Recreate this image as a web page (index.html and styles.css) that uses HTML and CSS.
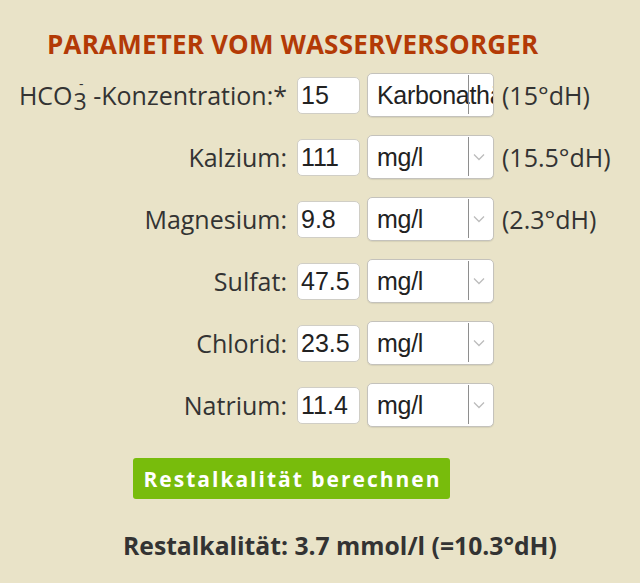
FILE: index.html
```html
<!DOCTYPE html>
<html lang="de">
<head>
<meta charset="utf-8">
<link rel="stylesheet" href="styles.css">
</head>
<body>
<div class="page">
  <h2 class="title">PARAMETER VOM WASSERVERSORGER</h2>
  <div class="rows">
    <div class="row">
      <label class="label">HCO<span class="ion-sub">3</span><span class="ion-sup">-</span> -Konzentration:*</label>
      <div class="input">15</div>
      <div class="select"><span class="sel-text">Karbonathärte</span><span class="divider"></span></div>
      <span class="note">(15°dH)</span>
    </div>
    <div class="row">
      <label class="label">Kalzium:</label>
      <div class="input">111</div>
      <div class="select"><span class="sel-text">mg/l</span><span class="divider"></span><svg class="chev" viewBox="0 0 12 8"><path d="M1 1.5 L6 6.5 L11 1.5" /></svg></div>
      <span class="note">(15.5°dH)</span>
    </div>
    <div class="row">
      <label class="label">Magnesium:</label>
      <div class="input">9.8</div>
      <div class="select"><span class="sel-text">mg/l</span><span class="divider"></span><svg class="chev" viewBox="0 0 12 8"><path d="M1 1.5 L6 6.5 L11 1.5" /></svg></div>
      <span class="note">(2.3°dH)</span>
    </div>
    <div class="row">
      <label class="label">Sulfat:</label>
      <div class="input">47.5</div>
      <div class="select"><span class="sel-text">mg/l</span><span class="divider"></span><svg class="chev" viewBox="0 0 12 8"><path d="M1 1.5 L6 6.5 L11 1.5" /></svg></div>
    </div>
    <div class="row">
      <label class="label">Chlorid:</label>
      <div class="input">23.5</div>
      <div class="select"><span class="sel-text">mg/l</span><span class="divider"></span><svg class="chev" viewBox="0 0 12 8"><path d="M1 1.5 L6 6.5 L11 1.5" /></svg></div>
    </div>
    <div class="row">
      <label class="label">Natrium:</label>
      <div class="input">11.4</div>
      <div class="select"><span class="sel-text">mg/l</span><span class="divider"></span><svg class="chev" viewBox="0 0 12 8"><path d="M1 1.5 L6 6.5 L11 1.5" /></svg></div>
    </div>
  </div>
  <div class="button-wrap"><button class="btn">Restalkalität berechnen</button></div>
  <p class="result">Restalkalität: 3.7 mmol/l (=10.3°dH)</p>
</div>
</body>
</html>
```
FILE: styles.css
```css
html, body {
  margin: 0;
  padding: 0;
  background: #e9e3c8;
}
body {
  width: 640px;
  height: 583px;
  overflow: hidden;
  font-family: "Open Sans", "DejaVu Sans", sans-serif;
  color: #333333;
}
.page {
  padding-top: 25px;
}
.title {
  margin: 0 0 0 47px;
  height: 39px;
  font-size: 26px;
  line-height: 38px;
  font-weight: 700;
  color: #b33a06;
  letter-spacing: 0.2px;
  white-space: nowrap;
}
.rows {
  display: flex;
  flex-direction: column;
}
.row {
  display: flex;
  align-items: center;
  height: 62px;
}
.label {
  width: 287px;
  text-align: right;
  font-size: 25px;
  line-height: 30px;
  margin-right: 10px;
  white-space: nowrap;
}
.ion-sub {
  font-size: 23px;
  line-height: 0;
  vertical-align: -5px;
  margin-left: 1px;
}
.ion-sup {
  display: inline-block;
  font-size: 14px;
  line-height: 0;
  vertical-align: 16px;
  margin-left: -11px;
  width: 11px;
  text-align: center;
}
.input {
  width: 63px;
  height: 37px;
  box-sizing: border-box;
  background: #ffffff;
  border: 1px solid #d0cec6;
  border-radius: 5px;
  font-family: "Liberation Sans", Arial, sans-serif;
  font-size: 25px;
  line-height: 35px;
  padding-left: 3px;
  color: #222222;
  margin-right: 7px;
  overflow: hidden;
  white-space: nowrap;
}
.select {
  position: relative;
  width: 127px;
  height: 44px;
  box-sizing: border-box;
  background: #ffffff;
  border: 1px solid #c4c2bc;
  border-radius: 5px;
  box-shadow: 0 1px 1px rgba(0,0,0,0.08);
  font-family: "Liberation Sans", Arial, sans-serif;
  font-size: 25px;
  line-height: 42px;
  color: #222222;
  overflow: hidden;
  white-space: nowrap;
  margin-right: 8px;
}
.sel-text {
  display: block;
  overflow: hidden;
  padding-left: 9px;
  letter-spacing: -0.3px;
}
.divider {
  position: absolute;
  left: 100px;
  top: 1px;
  bottom: 2px;
  width: 1px;
  background: #8e8e8e;
}
.chev {
  position: absolute;
  right: 8px;
  top: 17px;
  width: 12px;
  height: 8px;
  fill: none;
  stroke: #bcbcbc;
  stroke-width: 1.3;
}
.note {
  font-size: 25px;
  white-space: nowrap;
}
.button-wrap {
  padding: 22px 0 0 133px;
}
.btn {
  display: block;
  width: 317px;
  height: 41px;
  border: none;
  border-radius: 3px;
  background: #78bc0c;
  color: #ffffff;
  font-family: "Open Sans", "DejaVu Sans", sans-serif;
  font-weight: 700;
  font-size: 21px;
  letter-spacing: 2px;
  padding: 0 0 0 2px;
}
.result {
  margin: 32px 0 0 123px;
  font-size: 24.7px;
  font-weight: 700;
  line-height: 30px;
  white-space: nowrap;
}
```
